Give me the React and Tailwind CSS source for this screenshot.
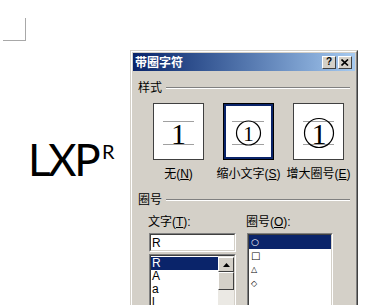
export default function App() {
  const raised =
    "border border-t-white border-l-white border-r-[#404040] border-b-[#404040] bg-[#d4d0c8]";
  const sunkenOuter =
    "border border-t-[#808080] border-l-[#808080] border-r-white border-b-white";
  const sunkenInner =
    "border border-t-[#404040] border-l-[#404040] border-r-[#d4d0c8] border-b-[#d4d0c8]";

  return (
    <div className="w-[390px] h-[305px] overflow-hidden bg-white flex font-['Liberation_Sans','Noto_Sans_CJK_SC',sans-serif] text-black">
      {/* document canvas */}
      <div className="w-[130px] shrink-0 flex flex-col">
        <div className="ml-[3px] mt-[18px] w-[23px] h-[23px] border-r border-b border-[#a8a8a8]" />
        <div className="mt-[96px] ml-[28px] flex items-start font-['Lato',sans-serif]">
          <span className="text-[44px] leading-[44px] tracking-[-2.5px]">LXP</span>
          <span className="text-[20px] leading-[20px] ml-[4px] mt-[4px]">R</span>
        </div>
      </div>

      {/* dialog */}
      <div className="mt-[50px] w-[228px] shrink-0 self-start border border-t-[#d4d0c8] border-l-[#d4d0c8] border-r-[#404040] border-b-[#404040] bg-[#d4d0c8]">
        <div className="border border-t-white border-l-white border-r-[#808080] border-b-[#808080] p-[1px] h-[300px]">
          {/* title bar */}
          <div className="h-[18px] flex items-center bg-linear-to-r from-[#0a246a] to-[#a6caf0] pl-[2px] pr-[3px]">
            <span className="text-white font-bold text-[12px] leading-[14px] font-['Noto_Sans_CJK_SC',sans-serif]">
              带圈字符
            </span>
            <div className="ml-auto flex gap-[2px]">
              <div className={`w-[14px] h-[13px] ${raised} flex items-center justify-center`}>
                <span className="text-[10px] leading-[10px] font-bold">?</span>
              </div>
              <div className={`w-[14px] h-[13px] ${raised} flex items-center justify-center`}>
                <svg width="8" height="7" viewBox="0 0 8 7">
                  <path d="M0.5 0.5 L7 6.5 M7 0.5 L0.5 6.5" stroke="#000" strokeWidth="1.6" />
                </svg>
              </div>
            </div>
          </div>

          {/* body */}
          <div className="px-[5px]">
            {/* 样式 */}
            <div className="mt-[10px] flex items-center h-[14px]">
              <span className="text-[12px] leading-[14px]">样式</span>
              <div className="flex-1 ml-[4px] h-[2px] border-t border-t-[#808080] border-b border-b-white" />
            </div>

            <div className="mt-[8px] pl-[15px] flex gap-[19px]">
              {/* none */}
              <div className="w-[51px] flex flex-col items-center">
                <div className="w-[51px] h-[57px] bg-white border border-[#404040]">
                  <svg width="49" height="55" viewBox="0 0 49 55">
                    <line x1="9" y1="17.5" x2="40" y2="17.5" stroke="#a0a0a0" />
                    <line x1="9" y1="40.5" x2="40" y2="40.5" stroke="#a0a0a0" />
                    <text x="24.5" y="40" textAnchor="middle" fontSize="30" fontFamily="Liberation Serif" fill="#000">
                      1
                    </text>
                  </svg>
                </div>
                <span className="mt-[7px] text-[12px] leading-[14px] whitespace-nowrap">
                  无(<u>N</u>)
                </span>
              </div>

              {/* shrink text */}
              <div className="w-[51px] flex flex-col items-center">
                <div className="w-[51px] h-[57px] bg-white border border-black">
                  <div className="w-full h-full border-2 border-[#0a246a]">
                    <svg width="45" height="51" viewBox="0 0 45 51">
                      <line x1="6" y1="15.5" x2="38" y2="15.5" stroke="#a0a0a0" />
                      <line x1="6" y1="38.5" x2="38" y2="38.5" stroke="#a0a0a0" />
                      <circle cx="22.5" cy="27" r="12" fill="#fff" stroke="#000" strokeWidth="1.2" />
                      <text x="22.5" y="34.5" textAnchor="middle" fontSize="21" fontFamily="Liberation Serif" fill="#000">
                        1
                      </text>
                    </svg>
                  </div>
                </div>
                <span className="mt-[7px] text-[12px] leading-[14px] whitespace-nowrap">
                  缩小文字(<u>S</u>)
                </span>
              </div>

              {/* enlarge circle */}
              <div className="w-[51px] flex flex-col items-center">
                <div className="w-[51px] h-[57px] bg-white border border-[#404040]">
                  <svg width="49" height="55" viewBox="0 0 49 55">
                    <line x1="9" y1="17.5" x2="40" y2="17.5" stroke="#a0a0a0" />
                    <line x1="9" y1="40.5" x2="40" y2="40.5" stroke="#a0a0a0" />
                    <circle cx="25" cy="29" r="14.5" fill="none" stroke="#000" strokeWidth="1.2" />
                    <text x="25" y="40" textAnchor="middle" fontSize="30" fontFamily="Liberation Serif" fill="#000">
                      1
                    </text>
                  </svg>
                </div>
                <span className="mt-[7px] text-[12px] leading-[14px] whitespace-nowrap">
                  增大圈号(<u>E</u>)
                </span>
              </div>
            </div>

            {/* 圈号 */}
            <div className="mt-[12px] flex items-center h-[14px]">
              <span className="text-[12px] leading-[14px]">圈号</span>
              <div className="flex-1 ml-[4px] h-[2px] border-t border-t-[#808080] border-b border-b-white" />
            </div>

            <div className="mt-[8px] pl-[10px] flex">
              {/* text column */}
              <div className="w-[98px] flex flex-col">
                <span className="text-[12px] leading-[14px] whitespace-nowrap">
                  文字(<u>T</u>):
                </span>
                <div className={`mt-[4px] ml-[1px] w-[87px] h-[19px] ${sunkenOuter}`}>
                  <div className={`w-full h-full ${sunkenInner} bg-white pl-[1px] flex items-center`}>
                    <span className="text-[12px] leading-[14px]">R</span>
                  </div>
                </div>
                <div className={`mt-[2px] ml-[1px] w-[87px] h-[70px] ${sunkenOuter}`}>
                  <div className={`w-full h-full ${sunkenInner} bg-white flex`}>
                    <div className="flex-1 pt-[1px] flex flex-col">
                      <div className="h-[13px] bg-[#0a246a] text-white text-[12px] leading-[13px] pl-[1px]">R</div>
                      <div className="h-[13px] text-[12px] leading-[13px] pl-[1px]">A</div>
                      <div className="h-[13px] text-[12px] leading-[13px] pl-[1px]">a</div>
                      <div className="h-[13px] text-[12px] leading-[13px] pl-[1px]">l</div>
                    </div>
                    <div className="w-[16px] flex flex-col pt-[1px] bg-[#ebe9e4]">
                      <div className={`h-[15px] ${raised} flex items-center justify-center`}>
                        <svg width="7" height="4" viewBox="0 0 7 4">
                          <path d="M3.5 0 L7 4 L0 4 Z" fill="#000" />
                        </svg>
                      </div>
                      <div className={`h-[18px] ${raised}`} />
                    </div>
                  </div>
                </div>
              </div>

              {/* circle column */}
              <div className="flex flex-col">
                <span className="text-[12px] leading-[14px] whitespace-nowrap">
                  圈号(<u>O</u>):
                </span>
                <div className={`mt-[4px] ml-[1px] w-[86px] h-[80px] ${sunkenOuter}`}>
                  <div className={`w-full h-full ${sunkenInner} bg-white flex flex-col`}>
                    <div className="h-[14px] bg-[#0a246a] text-white text-[9px] leading-[14px] pl-[2px] font-['DejaVu_Sans',sans-serif]">○</div>
                    <div className="h-[14px] text-[10px] leading-[14px] pl-[2px] font-['DejaVu_Sans',sans-serif]">□</div>
                    <div className="h-[14px] text-[8px] leading-[14px] pl-[2px] font-['DejaVu_Sans',sans-serif]">△</div>
                    <div className="h-[14px] text-[8px] leading-[14px] pl-[2px] font-['DejaVu_Sans',sans-serif]">◇</div>
                  </div>
                </div>
              </div>
            </div>
          </div>
        </div>
      </div>
    </div>
  );
}
